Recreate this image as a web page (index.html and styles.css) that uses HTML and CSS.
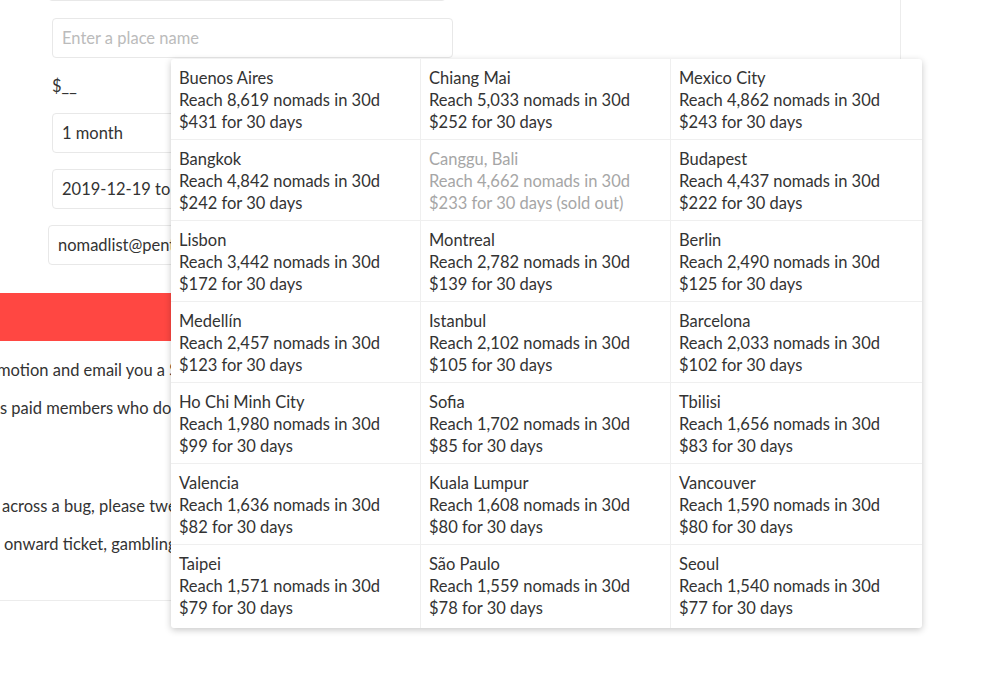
FILE: index.html
```html
<!DOCTYPE html>
<html lang="en">
<head>
  <meta charset="UTF-8" />
  <meta name="viewport" content="width=device-width, initial-scale=1.0" />
  <title>Post an ad</title>
  <link rel="stylesheet" href="styles.css">
</head>
<body>

  <div class="card">
    <div class="form">
      <div class="field field-prev"></div>
      <div class="field field-place"><span class="placeholder">Enter a place name</span></div>
      <div class="price">$__</div>
      <div class="field field-wide">1 month</div>
      <div class="field field-wide">2019-12-19 to 2020-01-18</div>
      <div class="field field-email">nomadlist@pentagram.com</div>
    </div>

    <div class="btn-buy"></div>

    <div class="notes">
      <p class="note n1">motion and email you a Stripe receipt</p>
      <p class="note n2">s paid members who don't see ads</p>
      <p class="note n3">across a bug, please tweet me</p>
      <p class="note n4">onward ticket, gambling, crypto or adult ads</p>
    </div>
  </div>

  <!-- Dropdown met steden -->
  <div class="dropdown">
    <div class="cell"><div>Buenos Aires</div><div>Reach 8,619 nomads in 30d</div><div>$431 for 30 days</div></div>
    <div class="cell"><div>Chiang Mai</div><div>Reach 5,033 nomads in 30d</div><div>$252 for 30 days</div></div>
    <div class="cell"><div>Mexico City</div><div>Reach 4,862 nomads in 30d</div><div>$243 for 30 days</div></div>

    <div class="cell"><div>Bangkok</div><div>Reach 4,842 nomads in 30d</div><div>$242 for 30 days</div></div>
    <div class="cell sold"><div>Canggu, Bali</div><div>Reach 4,662 nomads in 30d</div><div>$233 for 30 days (sold out)</div></div>
    <div class="cell"><div>Budapest</div><div>Reach 4,437 nomads in 30d</div><div>$222 for 30 days</div></div>

    <div class="cell"><div>Lisbon</div><div>Reach 3,442 nomads in 30d</div><div>$172 for 30 days</div></div>
    <div class="cell"><div>Montreal</div><div>Reach 2,782 nomads in 30d</div><div>$139 for 30 days</div></div>
    <div class="cell"><div>Berlin</div><div>Reach 2,490 nomads in 30d</div><div>$125 for 30 days</div></div>

    <div class="cell"><div>Medellín</div><div>Reach 2,457 nomads in 30d</div><div>$123 for 30 days</div></div>
    <div class="cell"><div>Istanbul</div><div>Reach 2,102 nomads in 30d</div><div>$105 for 30 days</div></div>
    <div class="cell"><div>Barcelona</div><div>Reach 2,033 nomads in 30d</div><div>$102 for 30 days</div></div>

    <div class="cell"><div>Ho Chi Minh City</div><div>Reach 1,980 nomads in 30d</div><div>$99 for 30 days</div></div>
    <div class="cell"><div>Sofia</div><div>Reach 1,702 nomads in 30d</div><div>$85 for 30 days</div></div>
    <div class="cell"><div>Tbilisi</div><div>Reach 1,656 nomads in 30d</div><div>$83 for 30 days</div></div>

    <div class="cell"><div>Valencia</div><div>Reach 1,636 nomads in 30d</div><div>$82 for 30 days</div></div>
    <div class="cell"><div>Kuala Lumpur</div><div>Reach 1,608 nomads in 30d</div><div>$80 for 30 days</div></div>
    <div class="cell"><div>Vancouver</div><div>Reach 1,590 nomads in 30d</div><div>$80 for 30 days</div></div>

    <div class="cell"><div>Taipei</div><div>Reach 1,571 nomads in 30d</div><div>$79 for 30 days</div></div>
    <div class="cell"><div>São Paulo</div><div>Reach 1,559 nomads in 30d</div><div>$78 for 30 days</div></div>
    <div class="cell"><div>Seoul</div><div>Reach 1,540 nomads in 30d</div><div>$77 for 30 days</div></div>
  </div>

</body>
</html>
```

FILE: styles.css
```css
* {
  box-sizing: border-box;
}

body {
  margin: 0;
  background: #fff;
  color: #333;
  font-family: Lato, "Noto Sans", sans-serif;
  font-size: 16.5px;
  overflow: hidden;
}

/* kaart met het formulier */
.card {
  display: flow-root;
  width: 902px;
  height: 601px;
  margin-left: -1px;
  border-right: 1px solid #ececec;
  border-bottom: 1px solid #ececec;
}

.form {
  padding-left: 53px;
}

.field {
  height: 40px;
  border: 1px solid #e8e8e8;
  border-radius: 4px;
  padding: 0 9px;
  display: flex;
  align-items: center;
  white-space: nowrap;
  overflow: hidden;
}

.field-prev {
  width: 398px;
  margin-top: -39px;
  margin-left: -4px;
}

.field-place {
  width: 401px;
  margin-top: 17px;
}

.placeholder {
  color: #bbb;
}

.price {
  height: 55px;
  display: flex;
  align-items: center;
}

.field-wide {
  width: 401px;
  margin-bottom: 16px;
}

.field-email {
  width: 401px;
  margin-left: -4px;
  margin-top: 1px;
}

.btn-buy {
  height: 48px;
  margin-top: 28px;
  background: #ff4742;
}

.notes {
  padding-top: 18px;
}

.note {
  margin: 0;
  height: 22px;
  line-height: 22px;
  white-space: nowrap;
}

.n1 { margin-left: -2px; }
.n2 { margin-top: 16px; margin-left: 1px; }
.n3 { margin-top: 76px; margin-left: 3px; }
.n4 { margin-top: 16px; margin-left: 5px; }

/* lijst met steden */
.dropdown {
  position: absolute;
  top: 59px;
  left: 171px;
  width: 751px;
  display: grid;
  grid-template-columns: 250px 250px 251px;
  background: #fff;
  border-radius: 3px;
  box-shadow: 0 2px 7px rgba(0, 0, 0, 0.22);
}

.cell {
  height: 81px;
  padding: 8px 8px 0 8px;
  line-height: 22px;
  border-right: 1px solid #efefef;
  border-bottom: 1px solid #efefef;
  white-space: nowrap;
}

.cell:nth-child(3n) {
  border-right: none;
}

.cell:nth-last-child(-n+3) {
  height: 83px;
  border-bottom: none;
}

.cell.sold {
  color: #a6a6a6;
}
```
